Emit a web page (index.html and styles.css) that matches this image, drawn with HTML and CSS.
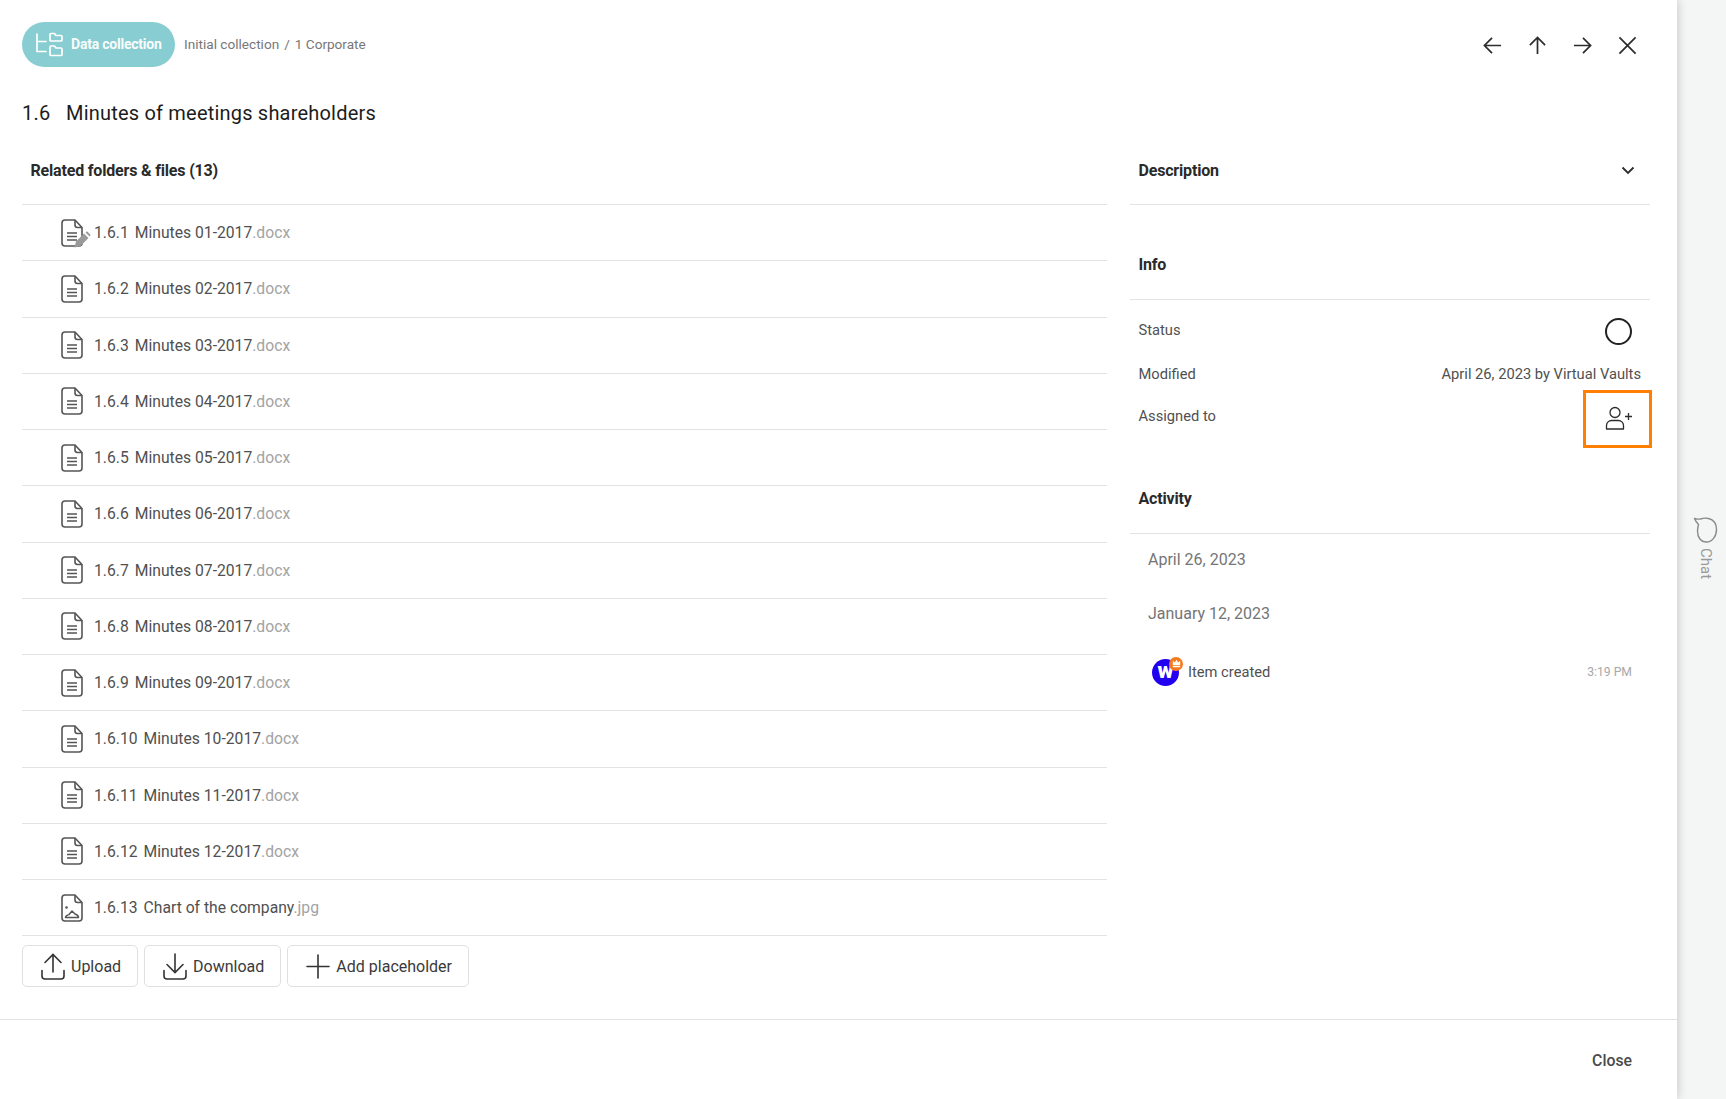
FILE: index.html
```html
<!DOCTYPE html>
<html lang="en">
<head>
<meta charset="utf-8">
<title>Minutes of meetings shareholders</title>
<link rel="stylesheet" href="styles.css">
</head>
<body>
<svg class="defs" width="0" height="0" aria-hidden="true">
  <symbol id="doc" viewBox="0 0 22 28">
    <path d="M4 1h10l7 7.5V24a3 3 0 0 1-3 3H4a3 3 0 0 1-3-3V4a3 3 0 0 1 3-3z" fill="none" stroke="#555" stroke-width="1.6" stroke-linejoin="round"/>
    <path d="M14 1v5a2.500 2.500 0 0 0 2.500 2.500H21" fill="none" stroke="#555" stroke-width="1.6"/>
    <path d="M6 14h10M6 17.500h10M6 21h10" stroke="#555" stroke-width="1.5"/>
  </symbol>
  <symbol id="img" viewBox="0 0 22 28">
    <path d="M4 1h10l7 7.500V24a3 3 0 0 1-3 3H4a3 3 0 0 1-3-3V4a3 3 0 0 1 3-3z" fill="none" stroke="#555" stroke-width="1.600" stroke-linejoin="round"/>
    <path d="M14 1v5a2.500 2.500 0 0 0 2.500 2.500H21" fill="none" stroke="#555" stroke-width="1.600"/>
    <circle cx="5.500" cy="13.500" r="1.300" fill="#555"/>
    <path d="M4.500 23.500c0-2 2-2.500 3.500-3l3-3.500 3 3c1.500.500 3.500 1.200 3.500 3.500z" fill="none" stroke="#555" stroke-width="1.500" stroke-linejoin="round"/>
  </symbol>
</svg>
<div class="app">
  <main class="panel">
    <div class="content">
      <header class="topbar">
        <div class="crumbs">
          <div class="pill">
            <svg class="pill-icon" viewBox="0 0 28 25" aria-hidden="true">
              <g fill="none" stroke="#fff" stroke-width="1.700" stroke-linejoin="round" stroke-linecap="round">
                <path d="M2 2v17.500h9M2 9.500h9"/>
                <path d="M15 2.500a1 1 0 0 1 1-1h3.500l1.500 2h5a1 1 0 0 1 1 1V8a1 1 0 0 1-1 1H16a1 1 0 0 1-1-1z"/>
                <path d="M15 15a1 1 0 0 1 1-1h3.500l1.500 2h5a1 1 0 0 1 1 1v5.500a1 1 0 0 1-1 1H16a1 1 0 0 1-1-1z"/>
              </g>
            </svg>
            <span class="pill-text">Data collection</span>
          </div>
          <span class="path">Initial collection<span class="sep">/</span>1 Corporate</span>
        </div>
        <nav class="nav-icons">
          <svg class="nav-icon" viewBox="0 0 20 20" aria-hidden="true"><path d="M19 10H1.500M9.500 2l-8 8 8 8"/></svg>
          <svg class="nav-icon" viewBox="0 0 20 20" aria-hidden="true"><path d="M10 19V1.500M2 9.500l8-8 8 8"/></svg>
          <svg class="nav-icon" viewBox="0 0 20 20" aria-hidden="true"><path d="M1 10h17.500M10.500 2l8 8-8 8"/></svg>
          <svg class="nav-icon" viewBox="0 0 20 20" aria-hidden="true"><path d="M1.500 1.500l17 17M18.500 1.500l-17 17"/></svg>
        </nav>
      </header>
      <h1 class="title"><span class="title-num">1.6</span>Minutes of meetings shareholders</h1>
      <div class="columns">
        <section class="files">
          <h2 class="section-head">Related folders &amp; files (13)</h2>
          <ul class="file-list">
            <li class="file-row"><span class="doc-wrap"><svg class="file-icon"><use href="#doc"/></svg><svg class="pencil" viewBox="0 0 17 17" aria-hidden="true"><path d="M.500 16.500l1.500-6 8-8 4.500 4.500-8 8z" fill="#9a9a9a"/><path d="M11.500 1.500l1.500-1.200 3.700 3.700-1.200 1.500z" fill="#9a9a9a"/></svg></span><span class="num">1.6.1</span><span>Minutes 01-2017<span class="ext">.docx</span></span></li>
            <li class="file-row"><span class="doc-wrap"><svg class="file-icon"><use href="#doc"/></svg></span><span class="num">1.6.2</span><span>Minutes 02-2017<span class="ext">.docx</span></span></li>
            <li class="file-row"><span class="doc-wrap"><svg class="file-icon"><use href="#doc"/></svg></span><span class="num">1.6.3</span><span>Minutes 03-2017<span class="ext">.docx</span></span></li>
            <li class="file-row"><span class="doc-wrap"><svg class="file-icon"><use href="#doc"/></svg></span><span class="num">1.6.4</span><span>Minutes 04-2017<span class="ext">.docx</span></span></li>
            <li class="file-row"><span class="doc-wrap"><svg class="file-icon"><use href="#doc"/></svg></span><span class="num">1.6.5</span><span>Minutes 05-2017<span class="ext">.docx</span></span></li>
            <li class="file-row"><span class="doc-wrap"><svg class="file-icon"><use href="#doc"/></svg></span><span class="num">1.6.6</span><span>Minutes 06-2017<span class="ext">.docx</span></span></li>
            <li class="file-row"><span class="doc-wrap"><svg class="file-icon"><use href="#doc"/></svg></span><span class="num">1.6.7</span><span>Minutes 07-2017<span class="ext">.docx</span></span></li>
            <li class="file-row"><span class="doc-wrap"><svg class="file-icon"><use href="#doc"/></svg></span><span class="num">1.6.8</span><span>Minutes 08-2017<span class="ext">.docx</span></span></li>
            <li class="file-row"><span class="doc-wrap"><svg class="file-icon"><use href="#doc"/></svg></span><span class="num">1.6.9</span><span>Minutes 09-2017<span class="ext">.docx</span></span></li>
            <li class="file-row"><span class="doc-wrap"><svg class="file-icon"><use href="#doc"/></svg></span><span class="num">1.6.10</span><span>Minutes 10-2017<span class="ext">.docx</span></span></li>
            <li class="file-row"><span class="doc-wrap"><svg class="file-icon"><use href="#doc"/></svg></span><span class="num">1.6.11</span><span>Minutes 11-2017<span class="ext">.docx</span></span></li>
            <li class="file-row"><span class="doc-wrap"><svg class="file-icon"><use href="#doc"/></svg></span><span class="num">1.6.12</span><span>Minutes 12-2017<span class="ext">.docx</span></span></li>
            <li class="file-row"><span class="doc-wrap"><svg class="file-icon"><use href="#img"/></svg></span><span class="num">1.6.13</span><span>Chart of the company<span class="ext">.jpg</span></span></li>
          </ul>
          <div class="actions">
            <button class="btn" type="button">
              <svg class="btn-icon" viewBox="0 0 24 27" aria-hidden="true"><path d="M12 19V1.500M4 9.500l8-8 8 8M1 17.500V23a3 3 0 0 0 3 3h16a3 3 0 0 0 3-3v-5.500"/></svg>
              Upload
            </button>
            <button class="btn" type="button">
              <svg class="btn-icon" viewBox="0 0 24 27" aria-hidden="true"><path d="M12 1v18M4 11.500l8 8 8-8M1 17.500V23a3 3 0 0 0 3 3h16a3 3 0 0 0 3-3v-5.500"/></svg>
              Download
            </button>
            <button class="btn" type="button">
              <svg class="btn-icon" viewBox="0 0 24 27" aria-hidden="true"><path d="M12 2v23M1 13.500h22"/></svg>
              Add placeholder
            </button>
          </div>
        </section>
        <aside class="details">
          <div class="section-head head-split">
            <h2 class="head-label">Description</h2>
            <svg class="chevron" viewBox="0 0 14 9" aria-hidden="true"><path d="M1.500 1.500L7 7l5.500-5.500"/></svg>
          </div>
          <h2 class="section-head info-head">Info</h2>
          <div class="info-rows">
            <div class="info-row status-row">
              <span class="info-label status-label">Status</span>
              <span class="status-circle"></span>
            </div>
            <div class="info-row modified-row">
              <span class="info-label">Modified</span>
              <span class="info-value">April 26, 2023 by Virtual Vaults</span>
            </div>
            <div class="info-row assigned-row">
              <span class="info-label assigned-label">Assigned to</span>
              <span class="assign-box">
                <svg class="assign-icon" viewBox="0 0 28 24" aria-hidden="true"><circle cx="10" cy="6.500" r="5"/><path d="M1.500 23v-3.500c0-3 2.500-5 5-5h7c2.500 0 5 2 5 5V23z"/><path d="M20 10.500h7M23.500 7v7"/></svg>
              </span>
            </div>
          </div>
          <h2 class="section-head activity-head">Activity</h2>
          <div class="activity-date date-first">April 26, 2023</div>
          <div class="activity-date date-second">January 12, 2023</div>
          <div class="activity-item">
            <span class="avatar"><span class="avatar-w">w</span>
              <span class="crown"><svg viewBox="0 0 12 12" aria-hidden="true"><path d="M2 3l2.200 2L6 2l1.800 3L10 3v4.500H2zM2 8.500h8V10H2z" fill="#fff"/></svg></span>
            </span>
            <span class="item-text">Item created</span>
            <span class="item-time">3:19 PM</span>
          </div>
        </aside>
      </div>
    </div>
    <footer class="footer"><span class="close-link">Close</span></footer>
  </main>
  <aside class="chat-rail">
    <svg class="chat-bubble" viewBox="0 0 25 27" aria-hidden="true"><path d="M1.500 1.500c2.500 1 4 .800 6 .500 2-.700 5-1.300 8-.500 5 1.300 8 5.500 8 11 0 7-4.500 12.500-10 12.500-6 0-9-5-9-11 0-2.500.500-4.500 1-6.500-1.500-1.500-3-3.500-4-6z"/></svg>
    <span class="chat-text">Chat</span>
  </aside>
</div>
</body>
</html>
```

FILE: styles.css
```css
* { box-sizing: border-box; }
html, body { margin: 0; height: 100%; }
body {
  font-family: Roboto, "Liberation Sans", sans-serif;
  color: #333;
  background: #fff;
  overflow: hidden;
}
.defs { position: absolute; }
.app { display: flex; height: 1099px; }
.panel {
  width: 1677px;
  display: flex;
  flex-direction: column;
  background: #fff;
  box-shadow: 0 0 10px rgba(0, 0, 0, 0.22);
  position: relative;
  z-index: 1;
}
.content { flex: 1; padding: 22px 27px 0 22px; }
.topbar { display: flex; justify-content: space-between; align-items: center; height: 45px; }
.crumbs { display: flex; align-items: center; gap: 9px; }
.pill {
  width: 153px;
  height: 45px;
  border-radius: 23px;
  background: #87cdd1;
  display: flex;
  align-items: center;
  gap: 8px;
  padding-left: 13px;
}
.pill-icon { width: 28px; height: 25px; }
.pill-text { color: #fff; font-size: 14px; font-weight: 700; letter-spacing: -0.22px; opacity: .95; margin-bottom: 2px; }
.path { font-size: 13.6px; color: #777; margin-bottom: 2px; }
.sep { margin: 0 5px; }
.nav-icons { display: flex; gap: 26px; margin: 2px 13px 0 0; }
.nav-icon { width: 19px; height: 19px; fill: none; stroke: #2c2c2c; stroke-width: 1.8; }
.title { margin: 31px 0 8px; height: 30px; font-size: 20px; line-height: 30px; font-weight: 400; color: #1c1c1c; letter-spacing: 0.2px; }
.title-num { display: inline-block; width: 44px; }
.columns { display: flex; justify-content: space-between; }
.files { width: 1085px; }
.details { width: 520px; }
.section-head {
  margin: 0;
  height: 69px;
  display: flex;
  align-items: center;
  padding: 0 8.5px;
  font-size: 16px;
  font-weight: 700;
  color: #2a2a2a;
  letter-spacing: -0.18px;
  border-bottom: 1px solid #e3e3e3;
}
.head-split { justify-content: space-between; padding-right: 15px; }
.head-label { margin: 0; font: inherit; }
.chevron { width: 14px; height: 9px; fill: none; stroke: #2c2c2c; stroke-width: 1.8; }
.file-list { list-style: none; margin: 0; padding: 0; }
.file-row {
  height: 56.25px;
  display: flex;
  align-items: center;
  padding-left: 39px;
  font-size: 15.7px;
  color: #505050;
  border-bottom: 1px solid #e3e3e3;
}
.doc-wrap { position: relative; width: 22px; height: 28px; margin-right: 11px; }
.file-icon { width: 22px; height: 28px; display: block; }
.pencil { position: absolute; left: 13px; top: 12px; width: 17px; height: 17px; }
.num { margin-right: 6px; }
.ext { color: #a3a3a3; }
.actions { display: flex; gap: 6px; margin-top: 9px; }
.btn {
  height: 42px;
  display: flex;
  align-items: center;
  gap: 6px;
  padding: 0 16px 0 18px;
  background: #fff;
  border: 1px solid #e0e0e0;
  border-radius: 5px;
  font: inherit;
  font-size: 16px;
  color: #3a3a3a;
}
.btn-icon { width: 24px; height: 27px; fill: none; stroke: #333; stroke-width: 1.6; stroke-linecap: round; }
.info-head { margin-top: 25px; padding-bottom: 1px; height: 70px; }
.info-rows { padding: 13px 0 0 8.5px; font-size: 14.7px; color: #505050; }
.info-row { display: flex; justify-content: space-between; align-items: center; }
.status-row { height: 36px; padding-right: 18px; }
.status-label { margin-bottom: 3px; }
.status-circle { width: 27px; height: 27px; border: 2px solid #222; border-radius: 50%; }
.modified-row { height: 32px; margin-top: 9px; padding-right: 9px; }
.assigned-row { align-items: flex-start; height: 58px; padding-right: 0; margin-right: -2px; }
.assigned-label { margin-top: 16px; line-height: 20px; }
.assign-box {
  width: 69px;
  height: 58px;
  border: 3px solid #ff8000;
  display: flex;
  align-items: center;
  justify-content: center;
  padding: 0 0 3px 2px;
}
.assign-icon { width: 28px; height: 24px; fill: none; stroke: #2c2c2c; stroke-width: 1.3; stroke-linejoin: round; }
.activity-head { margin-top: 15px; height: 71px; }
.activity-date { padding-left: 18px; font-size: 16px; color: #757575; line-height: 20px; }
.date-first { margin-top: 16px; }
.date-second { margin-top: 34px; }
.activity-item { display: flex; align-items: center; margin-top: 33px; padding: 0 18px 0 22px; height: 30px; }
.avatar {
  position: relative;
  width: 27px;
  height: 27px;
  border-radius: 50%;
  background: #2200f0;
  display: flex;
  align-items: center;
  justify-content: center;
  margin-right: 9px;
}
.avatar-w { color: #fff; font-weight: 900; font-size: 22px; line-height: 1; margin-top: -3px; }
.crown {
  position: absolute;
  right: -4px;
  top: -2px;
  width: 14px;
  height: 14px;
  border-radius: 50%;
  background: #f47a20;
  display: flex;
  align-items: center;
  justify-content: center;
}
.crown svg { width: 11px; height: 11px; }
.item-text { flex: 1; font-size: 14.7px; color: #505050; }
.item-time { font-size: 12.2px; color: #a8a8a8; }
.footer {
  height: 80px;
  border-top: 1px solid #e3e3e3;
  display: flex;
  align-items: center;
  justify-content: flex-end;
  padding: 2px 45px 0 0;
}
.close-link { font-size: 15.8px; font-weight: 500; color: #4a4a4a; }
.chat-rail {
  width: 49px;
  background: #f4f6f5;
  display: flex;
  flex-direction: column;
  align-items: center;
  justify-content: flex-start;
  padding: 517px 0 0 8px;
  gap: 4px;
}
.chat-bubble { width: 25px; height: 27px; fill: none; stroke: #8a8a8a; stroke-width: 1.4; stroke-linejoin: round; }
.chat-text { writing-mode: vertical-rl; font-size: 15px; color: #9a9a9a; }
```
